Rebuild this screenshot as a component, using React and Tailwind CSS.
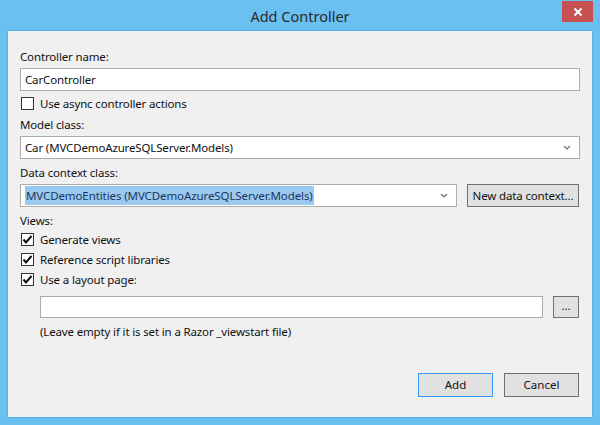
import React from "react";

const font = { fontFamily: '"Noto Sans", "Open Sans", sans-serif' };

function Chevron() {
  return (
    <svg width="8" height="5" viewBox="0 0 8 5" className="shrink-0">
      <path d="M1 1 L4 4 L7 1" stroke="#6d6d6d" strokeWidth="1.2" fill="none" />
    </svg>
  );
}

function Check({ checked }) {
  return (
    <div className="w-[13px] h-[13px] border border-[#333333] bg-white flex items-center justify-center shrink-0">
      {checked && (
        <svg width="11" height="11" viewBox="0 0 11 11">
          <path d="M1.5 5.5 L4 8.5 L9.5 2" stroke="#111111" strokeWidth="2" fill="none" />
        </svg>
      )}
    </div>
  );
}

function CheckRow({ checked, label, className = "" }) {
  return (
    <div className={"flex items-center h-[13px] pl-[13px] " + className}>
      <Check checked={checked} />
      <span className="ml-[6px] text-[11.5px] tracking-[-0.15px] leading-[13px] text-[#111111]">{label}</span>
    </div>
  );
}

function Label({ children, className = "" }) {
  return (
    <div className={"h-[16px] text-[11.5px] tracking-[-0.15px] leading-[16px] text-[#111111] pl-[12px] " + className}>{children}</div>
  );
}

export default function App() {
  return (
    <div style={font} className="w-[600px] h-[425px] bg-[#69c0f1] relative overflow-hidden">
      <div className="h-[30px] flex items-center justify-center pt-[3px] text-[14.5px] text-[#2b2b2b]">
        Add Controller
      </div>
      <div className="absolute right-[7px] top-[1px] w-[31px] h-[21px] bg-[#c75050] flex items-center justify-center">
        <svg width="10" height="10" viewBox="0 0 10 10">
          <path d="M1.5 1.5 L8.5 8.5 M8.5 1.5 L1.5 8.5" stroke="white" strokeWidth="2" />
        </svg>
      </div>
      <div className="ml-[7px] w-[586px] h-[388px] border border-[#5cb2e4] bg-[#f0f0f0] flex flex-col">
        <Label className="mt-[18px]">Controller name:</Label>
        <div className="mt-[3px] ml-[12px] w-[560px] h-[23px] bg-white border border-[#abadb3] flex items-center pl-[4px] text-[11.5px] tracking-[-0.15px] text-[#111111]">
          CarController
        </div>
        <CheckRow className="mt-[6px]" checked={false} label="Use async controller actions" />
        <Label className="mt-[7px]">Model class:</Label>
        <div className="mt-[3px] ml-[12px] w-[560px] h-[23px] bg-white border border-[#acacac] flex items-center pl-[4px] pr-[8px] text-[11.5px] tracking-[-0.15px] text-[#111111]">
          <span className="flex-1">Car (MVCDemoAzureSQLServer.Models)</span>
          <Chevron />
        </div>
        <Label className="mt-[6px]">Data context class:</Label>
        <div className="mt-[3px] ml-[12px] flex h-[23px]">
          <div className="w-[437px] h-[23px] bg-white border border-[#acacac] flex items-center pl-[4px] pr-[8px] text-[11.5px] tracking-[-0.1px]">
            <div className="flex-1">
              <span className="bg-[#99c9ef] text-[#1c355e] px-[1px] py-[2px]">MVCDemoEntities (MVCDemoAzureSQLServer.Models)</span>
            </div>
            <Chevron />
          </div>
          <div className="ml-[10px] w-[112px] h-[23px] bg-[#e1e1e1] border border-[#707070] flex items-center justify-center text-[11.5px] tracking-[-0.15px] text-[#111111]">
            New data context...
          </div>
        </div>
        <Label className="mt-[6px]">Views:</Label>
        <CheckRow className="mt-[4px]" checked label="Generate views" />
        <CheckRow className="mt-[7px]" checked label="Reference script libraries" />
        <CheckRow className="mt-[7px]" checked label="Use a layout page:" />
        <div className="mt-[10px] ml-[32px] flex h-[22px]">
          <div className="w-[503px] h-[22px] bg-white border border-[#abadb3]" />
          <div className="ml-[10px] w-[26px] h-[22px] bg-[#e1e1e1] border border-[#707070] flex items-center justify-center text-[11.5px] text-[#111111] pb-[3px]">
            ...
          </div>
        </div>
        <div className="mt-[6px] ml-[32px] h-[16px] text-[11.5px] tracking-[-0.15px] leading-[16px] text-[#111111]">
          (Leave empty if it is set in a Razor _viewstart file)
        </div>
        <div className="mt-[33px] ml-[410px] flex h-[24px]">
          <div className="w-[75px] h-[24px] bg-[#e1e1e1] border border-[#3399ff] flex items-center justify-center text-[11.5px] text-[#111111]">
            Add
          </div>
          <div className="ml-[11px] w-[75px] h-[24px] bg-[#e1e1e1] border border-[#707070] flex items-center justify-center text-[11.5px] text-[#111111]">
            Cancel
          </div>
        </div>
      </div>
    </div>
  );
}
